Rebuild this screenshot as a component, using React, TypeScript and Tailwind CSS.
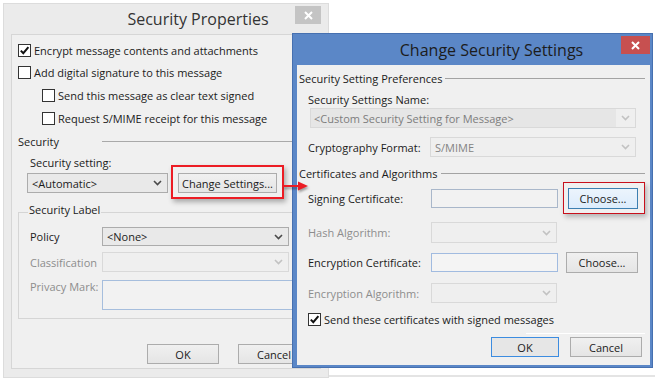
import React from 'react';

function Check() {
  return (
    <svg width="11" height="11" viewBox="0 0 11 11">
      <path d="M1.8 5.6L4.3 8.2L9.4 2.2" fill="none" stroke="#111" strokeWidth="2" />
    </svg>
  );
}

function Checkbox({ checked }: { checked?: boolean }) {
  return (
    <div className="w-[13px] h-[13px] border border-[#333] bg-white flex items-center justify-center shrink-0">
      {checked && <Check />}
    </div>
  );
}

function Chevron({ disabled }: { disabled?: boolean }) {
  return (
    <svg width="9" height="6" viewBox="0 0 9 6" className="shrink-0">
      <path d="M1 1l3.5 3.5L8 1" fill="none" stroke={disabled ? '#c2c2c2' : '#4a4a4a'} strokeWidth="1.6" />
    </svg>
  );
}

function Select({ text, className, disabled }: { text?: string; className: string; disabled?: boolean }) {
  return (
    <div
      className={`flex items-center justify-between border pl-[4px] pr-[5px] ${
        disabled ? 'border-[#d9d9d9] bg-[#efefef] text-[#838383]' : 'border-[#acacac] bg-[#e9e9e9] text-[#1b1b1b]'
      } ${className}`}
    >
      <span className="whitespace-nowrap">{text}</span>
      <Chevron disabled={disabled} />
    </div>
  );
}

function Btn({ label, className, kind }: { label: string; className: string; kind?: 'default' | 'hover' }) {
  const look =
    kind === 'default'
      ? 'border-[#3c8ce0] bg-[#e6e6e6]'
      : kind === 'hover'
      ? 'border-[#3c7fb1] bg-linear-to-b from-[#ecf4fc] to-[#dcecfc]'
      : 'border-[#acacac] bg-linear-to-b from-[#f0f0f0] to-[#e5e5e5]';
  return (
    <div className={`flex items-center justify-center border text-[#1b1b1b] whitespace-nowrap ${look} ${className}`}>
      {label}
    </div>
  );
}

function CloseX() {
  return (
    <svg width="9" height="9" viewBox="0 0 9 9">
      <path d="M1 1l7 7M8 1l-7 7" stroke="#fff" strokeWidth="2" />
    </svg>
  );
}

function SecurityProperties() {
  return (
    <div className="absolute left-[3px] top-[3px] w-[326px] h-[375px] bg-[#ebebeb] border border-[#dcdcdc]">
      <div className="relative h-[30px] flex items-center justify-center pl-[64px] text-[16px] text-[#333]">
        Security Properties
        <div className="absolute right-[7px] top-[2px] w-[26px] h-[18px] bg-[#c4c4c4] flex items-center justify-center">
          <CloseX />
        </div>
      </div>
      <div className="mx-[7px] h-[335px] border border-[#d6d6d6] bg-[#f0f0f0] overflow-hidden pt-[4px] text-[#1b1b1b]">
        <div className="h-[22px] flex items-center gap-[3px] pl-[6px]">
          <Checkbox checked />
          <span>Encrypt message contents and attachments</span>
        </div>
        <div className="h-[23px] flex items-center gap-[3px] pl-[6px]">
          <Checkbox />
          <span>Add digital signature to this message</span>
        </div>
        <div className="h-[23px] flex items-center gap-[3px] pl-[30px]">
          <Checkbox />
          <span>Send this message as clear text signed</span>
        </div>
        <div className="h-[23px] flex items-center gap-[3px] pl-[30px]">
          <Checkbox />
          <span>Request S/MIME receipt for this message</span>
        </div>
        <div className="h-[22px] flex items-center pl-[6px]">
          <span className="w-[84px]">Security</span>
          <div className="flex-1 h-px bg-[#a9a9a9]" />
        </div>
        <div className="h-[20px] flex items-center pl-[18px]">Security setting:</div>
        <div className="h-[22px] flex items-center pl-[15px]">
          <Select text="<Automatic>" className="w-[141px] h-[20px]" />
          <div className="relative ml-[10px]">
            <div className="absolute -left-[7px] -right-[7px] -top-[8px] -bottom-[6px] border-2 border-[#ec1c24] shadow-[2px_3px_5px_rgba(0,0,0,0.3)]" />
            <Btn label="Change Settings..." className="w-[99px] h-[20px]" />
          </div>
        </div>
        <div className="relative mt-[18px] ml-[6px] w-[300px] h-[107px] border border-[#d5d5d5]">
          <span className="absolute left-[9px] -top-[9px] bg-[#f0f0f0] px-[1px]">Security Label</span>
          <div className="mt-[14px] h-[19px] flex items-center">
            <span className="w-[83px] pl-[11px]">Policy</span>
            <Select text="<None>" className="w-[187px] h-[19px]" />
          </div>
          <div className="mt-[6px] h-[20px] flex items-center">
            <span className="w-[83px] pl-[11px] text-[#8d8d8d]">Classification</span>
            <Select disabled className="w-[187px] h-[20px]" />
          </div>
          <div className="mt-[8px] h-[30px] flex items-start">
            <span className="w-[83px] pl-[11px] pt-[1px] text-[#8d8d8d]">Privacy Mark:</span>
            <div className="w-[210px] h-[30px] border border-[#a6bedd] bg-[#f2f2f2]" />
          </div>
        </div>
        <div className="mt-[25px] flex gap-[19px] pl-[135px]">
          <Btn label="OK" className="w-[72px] h-[20px]" />
          <Btn label="Cancel" className="w-[72px] h-[20px]" />
        </div>
      </div>
    </div>
  );
}

function SectionHeader({ title }: { title: string }) {
  return (
    <div className="flex items-center pl-[2px] pr-[5px] h-full">
      <span className="whitespace-nowrap">{title}</span>
      <div className="ml-[3px] flex-1 h-px bg-[#a3a3a3]" />
    </div>
  );
}

function ChangeSecuritySettings() {
  return (
    <div className="absolute left-[292px] top-[33px] w-[361px] h-[335px] bg-[#5b87c7] border border-[#4670b0] flex flex-col pl-[4px] pr-[2px] pb-[2px]">
      <div className="relative h-[31px] shrink-0 flex items-center justify-center pl-[36px] text-[16px] text-[#1c1c1c]">
        Change Security Settings
        <div className="absolute right-0 top-[2px] w-[29px] h-[18px] bg-[#c75050] flex items-center justify-center">
          <CloseX />
        </div>
      </div>
      <div className="flex-1 bg-[#f0f0f0] pt-[3px] text-[#1b1b1b]">
        <div className="h-[20px]">
          <SectionHeader title="Security Setting Preferences" />
        </div>
        <div className="mt-[2px] h-[18px] flex items-center pl-[11px]">Security Settings Name:</div>
        <div className="ml-[13px] w-[326px] h-[20px] flex border border-[#d9d9d9] bg-[#e6e6e6] text-[#7d7d7d]">
          <span className="flex-1 pl-[3px] flex items-center whitespace-nowrap">&lt;Custom Security Setting for Message&gt;</span>
          <div className="w-[19px] bg-[#efefef] flex items-center justify-center">
            <Chevron disabled />
          </div>
        </div>
        <div className="mt-[9px] h-[20px] flex items-center pl-[11px]">
          <span className="w-[122px]">Cryptography Format:</span>
          <Select disabled text="S/MIME" className="w-[206px] h-[20px]" />
        </div>
        <div className="mt-[7px] h-[18px]">
          <SectionHeader title="Certificates and Algorithms" />
        </div>
        <div className="mt-[5px] h-[22px] flex items-center pl-[11px]">
          <span className="w-[123px]">Signing Certificate:</span>
          <div className="w-[127px] h-[19px] border border-[#a9b7ca] bg-[#f2f2f2]" />
          <div className="relative ml-[10px]">
            <div className="absolute -left-[5px] -right-[7px] -top-[6px] -bottom-[5px] border border-[#c8101c] shadow-[2px_3px_5px_rgba(0,0,0,0.25)]" />
            <Btn label="Choose..." kind="hover" className="w-[70px] h-[21px]" />
          </div>
        </div>
        <div className="mt-[13px] h-[21px] flex items-center pl-[11px]">
          <span className="w-[123px] text-[#8d8d8d]">Hash Algorithm:</span>
          <Select disabled className="w-[126px] h-[21px]" />
        </div>
        <div className="mt-[8px] h-[22px] flex items-center pl-[11px]">
          <span className="w-[123px]">Encryption Certificate:</span>
          <div className="w-[127px] h-[19px] border border-[#a1bbe0] bg-[#f4f4f4]" />
          <Btn label="Choose..." className="ml-[8px] w-[72px] h-[21px]" />
        </div>
        <div className="mt-[10px] h-[20px] flex items-center pl-[11px]">
          <span className="w-[123px] text-[#8d8d8d]">Encryption Algorithm:</span>
          <Select disabled className="w-[126px] h-[20px]" />
        </div>
        <div className="mt-[6px] h-[20px] flex items-center gap-[3px] pl-[11px]">
          <Checkbox checked />
          <span>Send these certificates with signed messages</span>
        </div>
        <div className="mt-[4px] ml-[229px] mr-[5px] h-px bg-white" />
        <div className="mt-[3px] flex justify-end gap-[11px] pr-[8px]">
          <Btn label="OK" kind="default" className="w-[68px] h-[20px]" />
          <Btn label="Cancel" className="w-[72px] h-[20px]" />
        </div>
      </div>
    </div>
  );
}

export default function App() {
  return (
    <div className="relative w-[657px] h-[380px] bg-white overflow-hidden font-['Open_Sans',sans-serif] text-[11px] leading-none">
      <div className="absolute left-[3px] right-[2px] top-[375px] h-[2px] bg-[#e4e4e4]" />
      <SecurityProperties />
      <ChangeSecuritySettings />
      <svg
        width="27"
        height="12"
        viewBox="0 0 27 12"
        className="absolute left-[283px] top-[180px] drop-shadow-[1px_2px_1px_rgba(0,0,0,0.35)]"
      >
        <path d="M0 6H17" stroke="#ec1c24" strokeWidth="2" />
        <path d="M15 1.5L25 6L15 10.5Z" fill="#ec1c24" />
      </svg>
    </div>
  );
}
